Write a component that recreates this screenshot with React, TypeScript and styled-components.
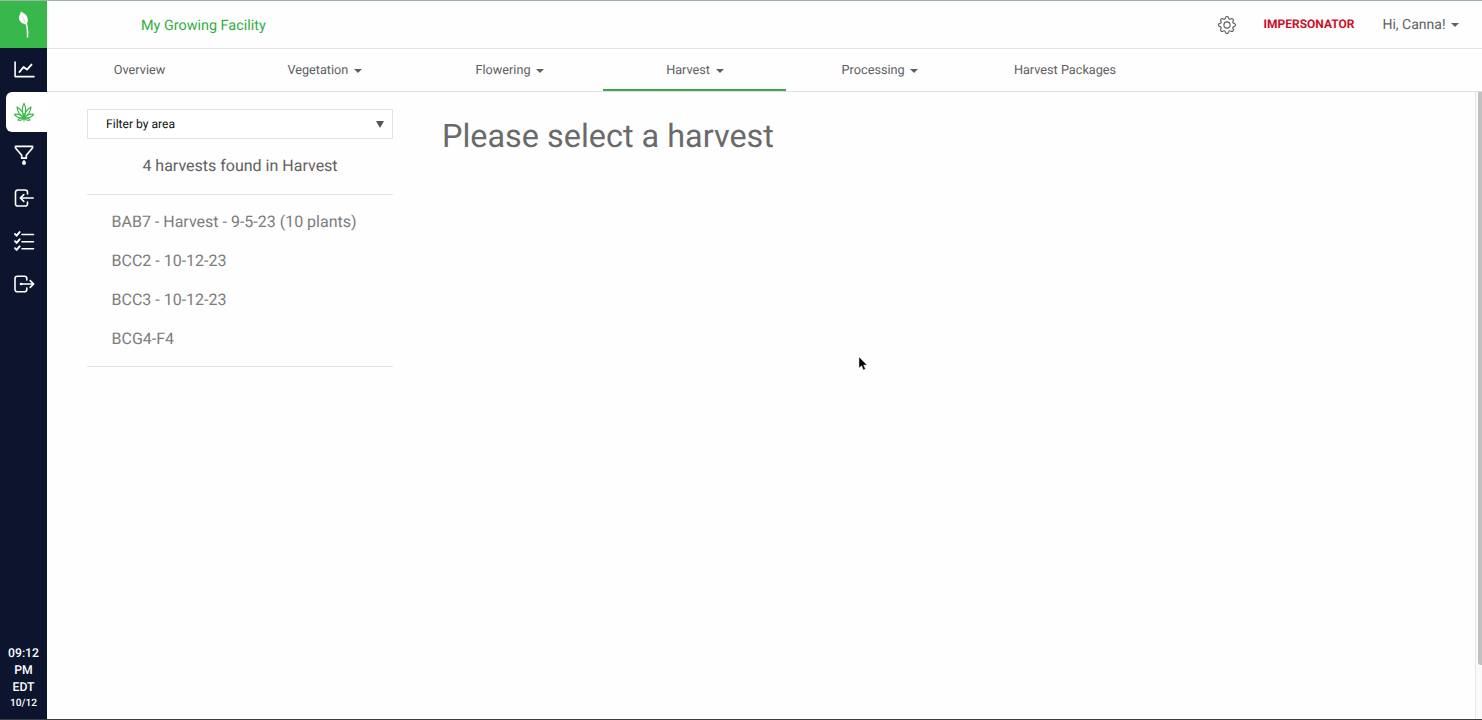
import type React from 'react';
import styled, { createGlobalStyle } from 'styled-components';
import { BsGear } from 'react-icons/bs';

const GlobalStyle = createGlobalStyle`
  * {
    box-sizing: border-box;
  }

  body {
    margin: 0;
    overflow: hidden;
    background: #fefefe;
    color: #606060;
    font-family: Roboto, 'Liberation Sans', sans-serif;
    text-rendering: geometricPrecision;
  }
`;

const tabs = [
  { label: 'Overview', menu: false },
  { label: 'Vegetation', menu: true },
  { label: 'Flowering', menu: true },
  { label: 'Harvest', menu: true, active: true },
  { label: 'Processing', menu: true },
  { label: 'Harvest Packages', menu: false },
];

const harvests = [
  'BAB7 - Harvest - 9-5-23 (10 plants)',
  'BCC2 - 10-12-23',
  'BCC3 - 10-12-23',
  'BCG4-F4',
];

const Root = styled.div`
  display: flex;
  height: 720px;
  border-top: 1px solid #9db3a7;
  border-bottom: 1px solid #3c3c42;
`;

const Sidebar = styled.aside`
  display: flex;
  flex-direction: column;
  flex: none;
  width: 47px;
  background: #0c142e;
`;

const Logo = styled.div`
  height: 47px;
  background: #38b84a;

  svg {
    display: block;
  }
`;

const SideItem = styled.a<{ $active?: boolean }>`
  display: flex;
  height: ${({ $active }) => ($active ? '40px' : '43px')};
  margin: ${({ $active }) => ($active ? '1px 0 2px 6px' : '0')};
  padding-bottom: ${({ $active }) => ($active ? '0' : '1px')};
  padding-left: ${({ $active }) => ($active ? '6px' : '12px')};
  align-items: center;
  border-radius: 6px 0 0 6px;
  background: ${({ $active }) => ($active ? '#fff' : 'transparent')};
  color: ${({ $active }) => ($active ? '#38b84a' : '#fff')};
`;

const Clock = styled.div`
  margin-top: auto;
  padding-bottom: 7px;
  color: #fff;
  font-size: 12.2px;
  font-weight: 500;
  line-height: 17px;
  text-align: center;

  small {
    display: block;
    font-size: 10.2px;
    line-height: 16px;
  }
`;

const Main = styled.div`
  display: flex;
  flex-direction: column;
  flex: 1;
`;

const Header = styled.header`
  display: flex;
  align-items: center;
  height: 48px;
  padding: 0 23px 0 94px;
  border-bottom: 1px solid #e4e4e4;
`;

const Facility = styled.span`
  margin-right: auto;
  padding-top: 1px;
  color: #2fae43;
  font-size: 14.4px;
`;

const Gear = styled(BsGear)`
  width: 18px;
  height: 18px;
  margin-right: 27px;
`;

const Impersonator = styled.span`
  margin-right: 28px;
  padding-bottom: 1px;
  color: #cb0d26;
  font-size: 12px;
  font-weight: 700;
`;

const User = styled.span`
  display: flex;
  align-items: center;
  font-size: 14px;
`;

const Caret = styled.i`
  margin-top: 1px;
  margin-left: 5.5px;
  border: 4px solid transparent;
  border-top-color: currentColor;
  border-bottom: 0;
`;

const Tabs = styled.nav`
  display: grid;
  grid-template-columns: repeat(6, 183.1px);
  column-gap: 2px;
  height: 43px;
  padding-left: 1px;
  border-bottom: 1px solid #e2e2e2;
`;

const Tab = styled.a<{ $active?: boolean }>`
  display: flex;
  justify-content: center;
  align-items: center;
  height: 42px;
  padding-top: 2px;
  border-bottom: 2px solid ${({ $active }) => ($active ? '#43a351' : 'transparent')};
  font-size: 12.7px;
`;

const Content = styled.main`
  display: flex;
  flex: 1;
`;

const Panel = styled.section`
  width: 306px;
  margin: 17px 0 0 40px;
`;

const AreaFilter = styled.div`
  display: flex;
  justify-content: space-between;
  align-items: center;
  height: 30px;
  padding: 0 8px 0 18px;
  border: 1px solid #e2e2e2;
  background: #fff;
  color: #111;
  font-size: 12.1px;
`;

const FilterArrow = styled.i`
  border: 4.5px solid transparent;
  border-top: 7px solid #555;
  border-bottom: 0;
`;

const Count = styled.div`
  height: 56px;
  border-bottom: 1px solid #e2e2e2;
  font-size: 16px;
  line-height: 54px;
  text-align: center;
`;

const HarvestList = styled.ul`
  height: 172px;
  margin: 0;
  padding: 8px 0 0 24.5px;
  border-bottom: 1px solid #e2e2e2;
  list-style: none;
`;

const HarvestItem = styled.li`
  height: 38.9px;
  color: #7c7c7c;
  font-size: 16px;
  line-height: 38.8px;
  white-space: nowrap;
`;

const Heading = styled.h1`
  margin: 23px auto 0 49px;
  color: #6a6a6a;
  font-size: 32.4px;
  font-weight: 400;
  line-height: 42px;
`;

const ScrollTrack = styled.div`
  width: 7px;
  padding-left: 2px;
  border-left: 1px solid #e8e8e8;
  background: #fafafa;
`;

const ScrollThumb = styled.div`
  height: 573px;
  border-radius: 0 0 0 3px;
  background: #c1c1c1;
`;

const Pointer = styled.svg`
  position: absolute;
  top: 356px;
  left: 858px;
`;

const SideIcon: React.FC<{ children: React.ReactNode }> = ({ children }) => (
  <svg
    width="24"
    height="24"
    viewBox="0 0 24 24"
    fill="none"
    stroke="currentColor"
    strokeWidth="1.6"
    strokeLinecap="round"
    strokeLinejoin="round"
  >
    {children}
  </svg>
);

const App: React.FC = () => (
  <>
    <GlobalStyle />

    <Root>
      <Sidebar>
        <Logo>
          <svg width="47" height="47" viewBox="0 1 47 47">
            <path d="M21 11.400C24.500 13 28 15.600 27.800 20c0 1.700-.4 3-1.200 4.500C22.500 24 19.200 21.800 19 18.300c-.1-2.800 1.300-4.600 2-6.900Z" fill="#fff" />
            <path d="M22.300 16c1.300 3 2.600 5.200 3.900 7.400" fill="none" stroke="#9bdca4" strokeWidth=".6" />
            <path d="M26 23c1.500 3.500 1.700 9 1.500 14.500" fill="none" stroke="#fff" strokeWidth="1.500" />
          </svg>
        </Logo>

        <SideItem>
          <SideIcon>
            <path d="M3.100 5v14.600H22" />
            <path d="m7.500 15 4-5 3.500 2.600 4.500-5" strokeWidth="1.900" />
          </SideIcon>
        </SideItem>
        <SideItem $active>
          <SideIcon>
            <g strokeWidth="1.100">
              <path d="M12 16.500C9.800 12.500 10 7.500 12 3.200c2 4.300 2.200 9.300 0 13.300Z" />
              <path d="M12 17.500C8 15.500 5.600 11.500 4.900 7 8.800 9.200 11.400 12.800 12 17.500Z" />
              <path d="M12 17.500c4-2 6.400-6 7.100-10.500-3.900 2.200-6.500 5.800-7.100 10.500Z" />
              <path d="M12 17.800C8.500 18.600 4.700 17.200 2.300 14.300c4-.6 7.400.6 9.700 3.500Z" />
              <path d="M12 17.800c3.500.8 7.300-.6 9.700-3.500-4-.6-7.400.6-9.700 3.500Z" />
              <path d="M12 17.800c-2.600-.3-4.800.4-6.200 2.200 2.500.8 4.900.1 6.200-2.200ZM12 17.800c2.600-.3 4.800.4 6.200 2.200-2.500.8-4.900.1-6.200-2.200ZM12 17.500v3.500" />
            </g>
          </SideIcon>
        </SideItem>
        <SideItem>
          <SideIcon>
            <path d="M3.500 3.300h17V5l-6.200 7.200v3H9.700v-3L3.500 5Z" strokeWidth="1.700" />
            <path d="M12 16.800c1.200 1.500 2 2.200 2 3.200a2 2 0 0 1-4 0c0-1 .8-1.700 2-3.200Z" fill="currentColor" stroke="none" />
          </SideIcon>
        </SideItem>
        <SideItem>
          <SideIcon>
            <path d="M15.500 8V6.300a2.300 2.300 0 0 0-2.300-2.300H5.800a2.300 2.300 0 0 0-2.300 2.300v11.400A2.300 2.300 0 0 0 5.800 20h7.400a2.300 2.300 0 0 0 2.300-2.300V16" />
            <path d="M21.200 12H8.500m3.300-3.400L8.300 12l3.500 3.400" />
          </SideIcon>
        </SideItem>
        <SideItem>
          <SideIcon>
            <path d="M10 5.500h11.500M10 12.700h11.500M10 19.700h11.500" />
            <path d="m3 5 1.600 1.700 3-3.600M3 12.200l1.600 1.700 3-3.600M3 19.200l1.600 1.700 3-3.600" strokeWidth="1.900" />
          </SideIcon>
        </SideItem>
        <SideItem>
          <SideIcon>
            <path d="M14.800 8V6.500a2.300 2.300 0 0 0-2.300-2.300H5.300A2.300 2.300 0 0 0 3 6.500v11a2.300 2.300 0 0 0 2.300 2.300h7.200a2.300 2.300 0 0 0 2.300-2.300V16" />
            <path d="M9 12h12.500m-3.300-3.400 3.500 3.400-3.500 3.400" />
            <circle cx="9" cy="12" r="1.300" fill="currentColor" stroke="none" />
          </SideIcon>
        </SideItem>

        <Clock>
          09:12
          <br />
          PM
          <br />
          EDT
          <small>10/12</small>
        </Clock>
      </Sidebar>

      <Main>
        <Header>
          <Facility>My Growing Facility</Facility>
          <Gear />
          <Impersonator>IMPERSONATOR</Impersonator>
          <User>
            Hi, Canna!
            <Caret />
          </User>
        </Header>

        <Tabs>
          {tabs.map((tab) => (
            <Tab key={tab.label} $active={tab.active}>
              {tab.label}
              {tab.menu && <Caret />}
            </Tab>
          ))}
        </Tabs>

        <Content>
          <Panel>
            <AreaFilter>
              Filter by area
              <FilterArrow />
            </AreaFilter>
            <Count>4 harvests found in Harvest</Count>
            <HarvestList>
              {harvests.map((harvest) => (
                <HarvestItem key={harvest}>{harvest}</HarvestItem>
              ))}
            </HarvestList>
          </Panel>

          <Heading>Please select a harvest</Heading>

          <ScrollTrack>
            <ScrollThumb />
          </ScrollTrack>
        </Content>
      </Main>
    </Root>

    <Pointer width="11" height="16" viewBox="0 0 11 16">
      <path d="M1 1v11l2.600-2.300 1.800 4.200 2-.9-1.800-4H9Z" fill="#000" stroke="#ddd" strokeWidth=".5" />
    </Pointer>
  </>
);

export default App;
